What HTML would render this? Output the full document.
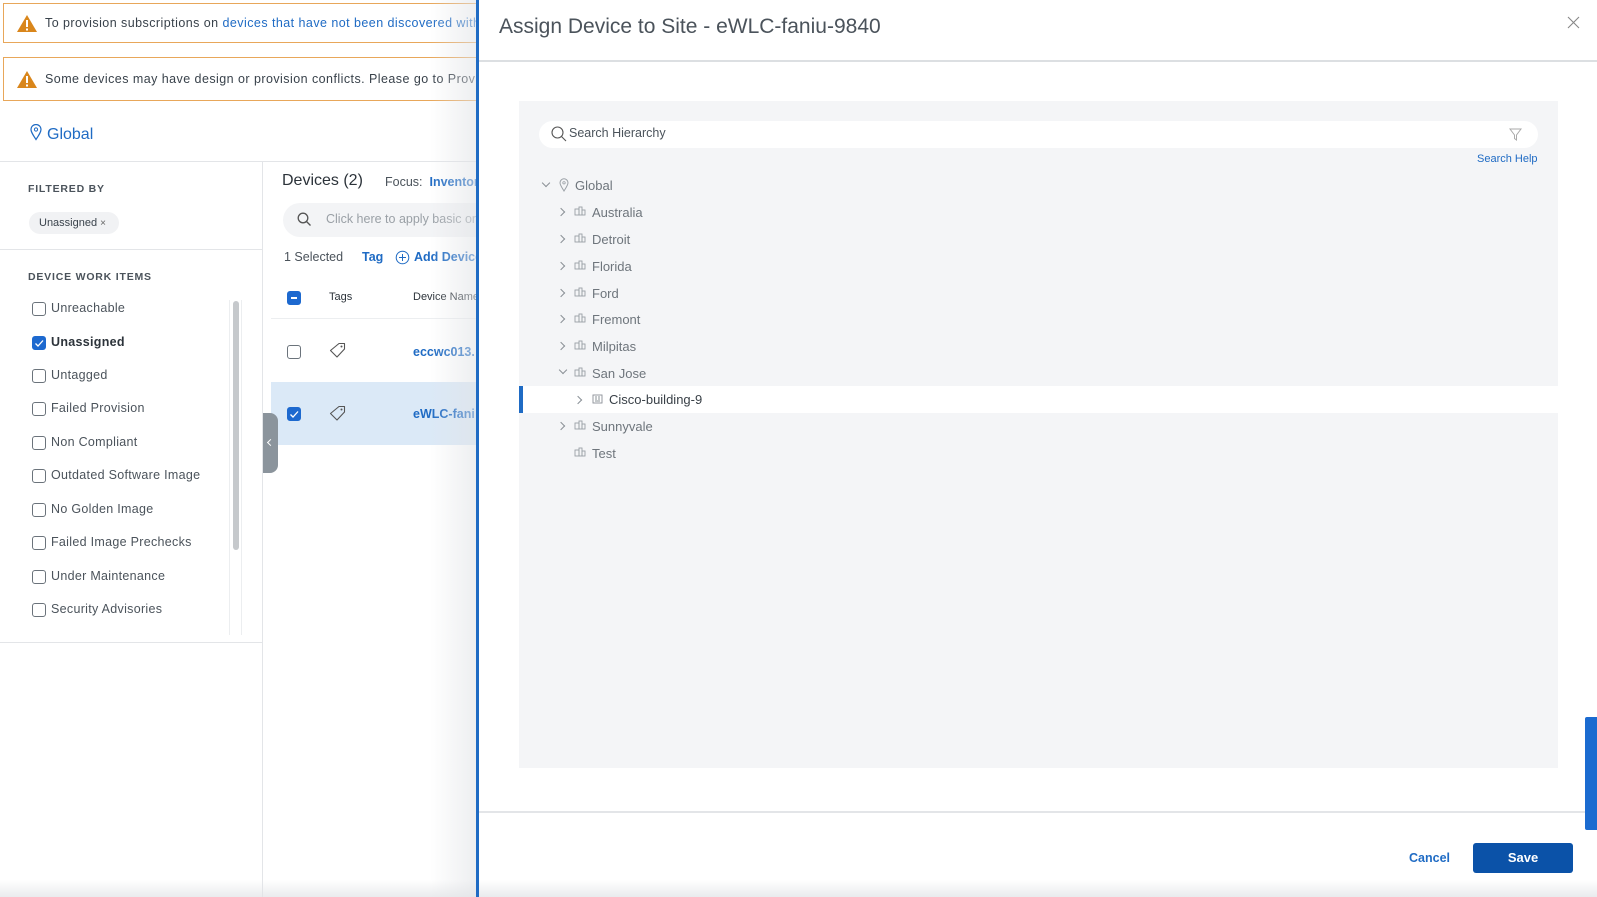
<!DOCTYPE html>
<html><head><meta charset="utf-8"><style>
*{box-sizing:border-box;margin:0;padding:0}
body{width:1597px;height:897px;overflow:hidden;background:#fff;font-family:"Liberation Sans",sans-serif;color:#39424b;position:relative}
.a{position:absolute;white-space:nowrap}
.ban{position:absolute;left:3px;width:480px;border:1px solid #e8a75a;background:#fff;font-size:12.5px;letter-spacing:.45px}
.blue{color:#1f6bc4}
.cb{position:absolute;width:14px;height:14px;border:1.3px solid #6b737b;border-radius:3px;background:#fff}
.cb.on{background:#1d69cf;border-color:#1d69cf}
.wi{font-size:12.5px;color:#4b535b;letter-spacing:.3px}
.tr{font-size:13px;color:#6e757c}
.chev{position:absolute;width:6px;height:6px;border-right:1.3px solid #8a9096;border-bottom:1.3px solid #8a9096}
</style></head><body>

<div class="ban" style="top:3px;height:40px"><svg class="a" style="left:12px;top:10px" width="22" height="19" viewBox="0 0 22 19"><path d="M11 1L21 18H1Z" fill="#d9861b"/><rect x="10" y="6" width="2" height="7" fill="#fff"/><rect x="10" y="14.5" width="2" height="2" fill="#fff"/></svg><span class="a" style="left:41px;top:12px">To provision subscriptions on <span class="blue">devices that have not been discovered with</span></span></div>
<div class="ban" style="top:57px;height:44px"><svg class="a" style="left:12px;top:12px" width="22" height="19" viewBox="0 0 22 19"><path d="M11 1L21 18H1Z" fill="#d9861b"/><rect x="10" y="6" width="2" height="7" fill="#fff"/><rect x="10" y="14.5" width="2" height="2" fill="#fff"/></svg><span class="a" style="left:41px;top:14px">Some devices may have design or provision conflicts. Please go to Provisi</span></div>

<svg class="a" style="left:30px;top:124px" width="12" height="17" viewBox="0 0 12 17"><path d="M6 15.5C3 11 1 8 1 5.5a5 5 0 0 1 10 0C11 8 9 11 6 15.5Z" fill="none" stroke="#1f6bc4" stroke-width="1.2"/><circle cx="6" cy="5.5" r="1.6" fill="none" stroke="#1f6bc4" stroke-width="1"/></svg>
<div class="a blue" style="left:47px;top:126px;font-size:16px">Global</div>
<div class="a" style="left:0;top:161px;width:477px;height:1px;background:#e3e5e8"></div>

<div class="a" style="left:262px;top:162px;width:1px;height:735px;background:#e3e5e8"></div>
<div class="a" style="left:28px;top:183px;font-size:10.5px;font-weight:bold;letter-spacing:.8px;color:#4b535b">FILTERED BY</div>
<div class="a" style="left:29px;top:212px;width:90px;height:22px;background:#f1f2f4;border-radius:11px;font-size:11px;color:#39424b;padding:5px 0 0 10px">Unassigned <span style="font-size:10px;color:#666">×</span></div>
<div class="a" style="left:0;top:249px;width:262px;height:1px;background:#e3e5e8"></div>
<div class="a" style="left:28px;top:271px;font-size:10.5px;font-weight:bold;letter-spacing:.8px;color:#4b535b">DEVICE WORK ITEMS</div>

<div class="cb" style="left:32px;top:302px"></div><div class="a wi" style="left:51px;top:301px">Unreachable</div>
<div class="cb on" style="left:32px;top:336px"><svg width="12" height="12" style="position:absolute;left:0;top:0"><path d="M2.5 6.5L5 9L10 3.5" stroke="#fff" stroke-width="1.3" fill="none"/></svg></div><div class="a wi" style="left:51px;top:335px;color:#2c333a;font-weight:bold">Unassigned</div>
<div class="cb" style="left:32px;top:369px"></div><div class="a wi" style="left:51px;top:368px">Untagged</div>
<div class="cb" style="left:32px;top:402px"></div><div class="a wi" style="left:51px;top:401px">Failed Provision</div>
<div class="cb" style="left:32px;top:436px"></div><div class="a wi" style="left:51px;top:435px">Non Compliant</div>
<div class="cb" style="left:32px;top:469px"></div><div class="a wi" style="left:51px;top:468px">Outdated Software Image</div>
<div class="cb" style="left:32px;top:503px"></div><div class="a wi" style="left:51px;top:502px">No Golden Image</div>
<div class="cb" style="left:32px;top:536px"></div><div class="a wi" style="left:51px;top:535px">Failed Image Prechecks</div>
<div class="cb" style="left:32px;top:570px"></div><div class="a wi" style="left:51px;top:569px">Under Maintenance</div>
<div class="cb" style="left:32px;top:603px"></div><div class="a wi" style="left:51px;top:602px">Security Advisories</div>
<div class="a" style="left:229px;top:300px;width:13px;height:335px;border-left:1px solid #eceef0;border-right:1px solid #eceef0"></div>
<div class="a" style="left:233px;top:301px;width:6px;height:249px;background:#c6c9cc;border-radius:3px"></div>
<div class="a" style="left:0;top:642px;width:262px;height:1px;background:#e3e5e8"></div>

<div class="a" style="left:282px;top:172px;font-size:16px;color:#2c333a">Devices (2)</div>
<div class="a" style="left:385px;top:175px;font-size:12.5px;color:#4b535b">Focus: <span class="blue" style="font-weight:600">&nbsp;Inventory</span></div>
<div class="a" style="left:283px;top:203px;width:220px;height:34px;background:#f3f4f6;border-radius:17px"></div>
<svg class="a" style="left:297px;top:212px" width="15" height="15" viewBox="0 0 15 15"><circle cx="6" cy="6" r="4.8" fill="none" stroke="#555" stroke-width="1.3"/><path d="M9.5 9.5L13.5 13.5" stroke="#555" stroke-width="1.3"/></svg>
<div class="a" style="left:326px;top:212px;font-size:12.5px;color:#9aa0a6">Click here to apply basic or</div>
<div class="a" style="left:284px;top:250px;font-size:12.5px;color:#4b535b">1 Selected</div>
<div class="a blue" style="left:362px;top:250px;font-size:12.5px;font-weight:600">Tag</div>
<svg class="a" style="left:395px;top:250px" width="15" height="15"><circle cx="7.5" cy="7.5" r="6.3" fill="none" stroke="#1f6bc4" stroke-width="1"/><path d="M7.5 4v7M4 7.5h7" stroke="#1f6bc4"/></svg>
<div class="a blue" style="left:414px;top:250px;font-size:12.5px;font-weight:600">Add Device</div>
<div class="a" style="left:271px;top:318px;width:206px;height:1px;background:#eceef0"></div>
<div class="cb on" style="left:287px;top:291px"><div style="position:absolute;left:2.5px;top:5px;width:6px;height:1.5px;background:#fff"></div></div>
<div class="a" style="left:329px;top:291px;font-size:11px;color:#2c333a">Tags</div>
<div class="a" style="left:413px;top:291px;font-size:11px;color:#2c333a">Device Name</div>
<div class="cb" style="left:287px;top:345px"></div>
<svg class="a" style="left:329px;top:342px" width="18" height="17" viewBox="0 0 18 17"><path d="M10 1.5h5.5v5.5L8 15 1.5 8.5Z" fill="none" stroke="#555" stroke-width="1.1" stroke-linejoin="round"/><circle cx="12.5" cy="4.5" r="1" fill="#555"/></svg>
<div class="a blue" style="left:413px;top:345px;font-size:12.5px;font-weight:600">eccwc013.</div>
<div class="a" style="left:271px;top:382px;width:206px;height:63px;background:#dbe9f7"></div>
<div class="cb on" style="left:287px;top:407px"><svg width="12" height="12" style="position:absolute;left:0;top:0"><path d="M2.5 6.5L5 9L10 3.5" stroke="#fff" stroke-width="1.3" fill="none"/></svg></div>
<svg class="a" style="left:329px;top:405px" width="18" height="17" viewBox="0 0 18 17"><path d="M10 1.5h5.5v5.5L8 15 1.5 8.5Z" fill="none" stroke="#555" stroke-width="1.1" stroke-linejoin="round"/><circle cx="12.5" cy="4.5" r="1" fill="#555"/></svg>
<div class="a blue" style="left:413px;top:407px;font-size:12.5px;font-weight:600">eWLC-fani</div>
<div class="a" style="left:263px;top:413px;width:15px;height:60px;background:#8b949c;border-radius:0 8px 8px 0"></div>
<div class="a" style="left:268px;top:440px;width:5px;height:5px;border-left:1.2px solid #fff;border-bottom:1.2px solid #fff;transform:rotate(45deg)"></div>
<div class="a" style="left:430px;top:0;width:47px;height:897px;background:linear-gradient(90deg,rgba(255,255,255,0),rgba(225,227,230,.6))"></div>
<div class="a" style="left:0;top:880px;width:477px;height:17px;background:linear-gradient(180deg,rgba(255,255,255,0),rgba(225,227,230,.7))"></div>

<div class="a" style="left:476px;top:0;width:1121px;height:897px;background:#fff;border-left:3px solid #1f6bc4"></div>
<div class="a" style="left:499px;top:15px;font-size:21px;color:#4b535b">Assign Device to Site - eWLC-faniu-9840</div>
<svg class="a" style="left:1567px;top:16px" width="13" height="13"><path d="M1 1L12 12M12 1L1 12" stroke="#888" stroke-width="1.1"/></svg>
<div class="a" style="left:479px;top:60px;width:1118px;height:1.5px;background:#dcdfe2"></div>

<div class="a" style="left:519px;top:101px;width:1039px;height:667px;background:#f4f5f7"></div>
<div class="a" style="left:539px;top:121px;width:999px;height:27px;background:#fff;border-radius:14px"></div>
<svg class="a" style="left:551px;top:126px" width="16" height="16" viewBox="0 0 16 16"><circle cx="6.5" cy="6.5" r="5.5" fill="none" stroke="#555" stroke-width="1.1"/><path d="M10.5 10.5L15 15" stroke="#555" stroke-width="1.1"/></svg>
<div class="a" style="left:569px;top:126px;font-size:12.5px;color:#4b535b">Search Hierarchy</div>
<svg class="a" style="left:1509px;top:128px" width="13" height="13" viewBox="0 0 13 13"><path d="M1 1h11L7.5 7v5L5.5 10.5V7Z" fill="none" stroke="#aaa" stroke-width="1"/></svg>
<div class="a blue" style="left:1477px;top:153px;font-size:11px">Search Help</div>

<div class="chev" style="left:543px;top:180px;transform:rotate(45deg)"></div>
<svg class="a" style="left:559px;top:178px" width="10" height="14" viewBox="0 0 10 14"><path d="M5 13C2.5 9 1 7 1 4.8a4 4 0 0 1 8 0C9 7 7.5 9 5 13Z" fill="none" stroke="#9aa0a6"/><circle cx="5" cy="4.8" r="1.2" fill="none" stroke="#9aa0a6" stroke-width=".8"/></svg>
<div class="a tr" style="left:575px;top:178px">Global</div>

<div class="chev" style="left:558px;top:209px;transform:rotate(-45deg)"></div>
<svg class="a" style="left:574px;top:205px" width="12" height="11" viewBox="0 0 12 11"><g fill="none" stroke="#9aa0a6" stroke-width=".9"><rect x="1" y="4" width="4" height="6"/><rect x="5" y="2" width="3" height="8"/><rect x="8" y="5" width="3" height="5"/></g></svg>
<div class="a tr" style="left:592px;top:205px">Australia</div>

<div class="chev" style="left:558px;top:236px;transform:rotate(-45deg)"></div>
<svg class="a" style="left:574px;top:232px" width="12" height="11" viewBox="0 0 12 11"><g fill="none" stroke="#9aa0a6" stroke-width=".9"><rect x="1" y="4" width="4" height="6"/><rect x="5" y="2" width="3" height="8"/><rect x="8" y="5" width="3" height="5"/></g></svg>
<div class="a tr" style="left:592px;top:232px">Detroit</div>

<div class="chev" style="left:558px;top:263px;transform:rotate(-45deg)"></div>
<svg class="a" style="left:574px;top:259px" width="12" height="11" viewBox="0 0 12 11"><g fill="none" stroke="#9aa0a6" stroke-width=".9"><rect x="1" y="4" width="4" height="6"/><rect x="5" y="2" width="3" height="8"/><rect x="8" y="5" width="3" height="5"/></g></svg>
<div class="a tr" style="left:592px;top:259px">Florida</div>

<div class="chev" style="left:558px;top:290px;transform:rotate(-45deg)"></div>
<svg class="a" style="left:574px;top:286px" width="12" height="11" viewBox="0 0 12 11"><g fill="none" stroke="#9aa0a6" stroke-width=".9"><rect x="1" y="4" width="4" height="6"/><rect x="5" y="2" width="3" height="8"/><rect x="8" y="5" width="3" height="5"/></g></svg>
<div class="a tr" style="left:592px;top:286px">Ford</div>

<div class="chev" style="left:558px;top:316px;transform:rotate(-45deg)"></div>
<svg class="a" style="left:574px;top:312px" width="12" height="11" viewBox="0 0 12 11"><g fill="none" stroke="#9aa0a6" stroke-width=".9"><rect x="1" y="4" width="4" height="6"/><rect x="5" y="2" width="3" height="8"/><rect x="8" y="5" width="3" height="5"/></g></svg>
<div class="a tr" style="left:592px;top:312px">Fremont</div>

<div class="chev" style="left:558px;top:343px;transform:rotate(-45deg)"></div>
<svg class="a" style="left:574px;top:339px" width="12" height="11" viewBox="0 0 12 11"><g fill="none" stroke="#9aa0a6" stroke-width=".9"><rect x="1" y="4" width="4" height="6"/><rect x="5" y="2" width="3" height="8"/><rect x="8" y="5" width="3" height="5"/></g></svg>
<div class="a tr" style="left:592px;top:339px">Milpitas</div>

<div class="chev" style="left:560px;top:367px;transform:rotate(45deg)"></div>
<svg class="a" style="left:574px;top:366px" width="12" height="11" viewBox="0 0 12 11"><g fill="none" stroke="#9aa0a6" stroke-width=".9"><rect x="1" y="4" width="4" height="6"/><rect x="5" y="2" width="3" height="8"/><rect x="8" y="5" width="3" height="5"/></g></svg>
<div class="a tr" style="left:592px;top:366px">San Jose</div>

<div class="a" style="left:519px;top:386px;width:1039px;height:27px;background:#fff"></div>
<div class="a" style="left:519px;top:386px;width:4px;height:27px;background:#1f6bc4"></div>
<div class="chev" style="left:575px;top:397px;transform:rotate(-45deg)"></div>
<svg class="a" style="left:592px;top:394px" width="11" height="10" viewBox="0 0 11 10"><g fill="none" stroke="#8a9096" stroke-width=".9"><rect x="1" y="1" width="9" height="8"/><path d="M3 3h2M6 3h2M3 5h2M6 5h2M3 7h5"/></g></svg>
<div class="a" style="left:609px;top:392px;font-size:13px;color:#3a4148">Cisco-building-9</div>

<div class="chev" style="left:558px;top:423px;transform:rotate(-45deg)"></div>
<svg class="a" style="left:574px;top:419px" width="12" height="11" viewBox="0 0 12 11"><g fill="none" stroke="#9aa0a6" stroke-width=".9"><rect x="1" y="4" width="4" height="6"/><rect x="5" y="2" width="3" height="8"/><rect x="8" y="5" width="3" height="5"/></g></svg>
<div class="a tr" style="left:592px;top:419px">Sunnyvale</div>

<svg class="a" style="left:574px;top:446px" width="12" height="11" viewBox="0 0 12 11"><g fill="none" stroke="#9aa0a6" stroke-width=".9"><rect x="1" y="4" width="4" height="6"/><rect x="5" y="2" width="3" height="8"/><rect x="8" y="5" width="3" height="5"/></g></svg>
<div class="a tr" style="left:592px;top:446px">Test</div>

<div class="a" style="left:479px;top:811px;width:1106px;height:1.5px;background:#e3e5e8"></div>
<div class="a blue" style="left:1409px;top:851px;font-size:12.5px;font-weight:bold">Cancel</div>
<div class="a" style="left:1473px;top:843px;width:100px;height:30px;background:#0b52a8;border-radius:3px;color:#fff;font-size:13px;font-weight:bold;text-align:center;line-height:30px">Save</div>
<div class="a" style="left:1585px;top:717px;width:12px;height:113px;background:#1b6bd0;border-radius:2px 0 0 2px"></div>
<div class="a" style="left:479px;top:880px;width:1118px;height:17px;background:linear-gradient(180deg,rgba(255,255,255,0),rgba(228,230,233,.8))"></div>
</body></html>
